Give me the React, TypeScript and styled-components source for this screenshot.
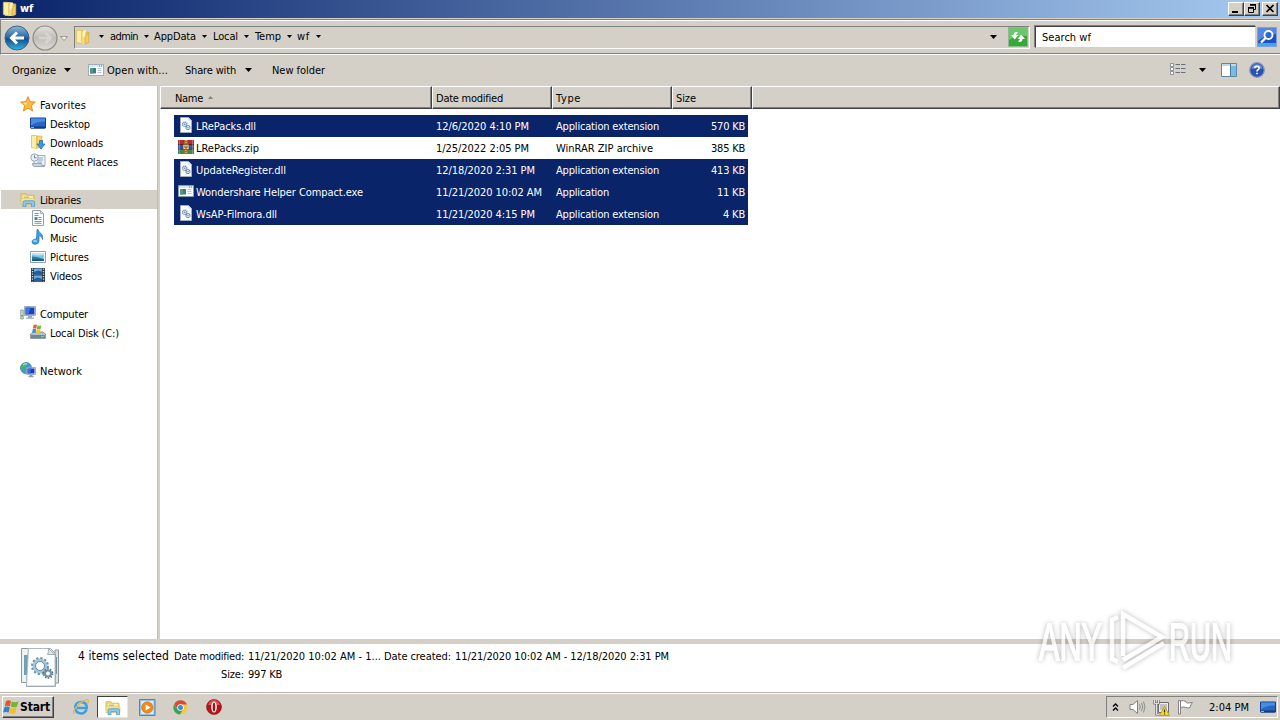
import { useLayoutEffect, useRef, useState, type ReactNode } from "react";
import styled, { createGlobalStyle, css } from "styled-components";

const GlobalStyle = createGlobalStyle`
  * { box-sizing: border-box; }
  body {
    margin: 0;
    overflow: hidden;
    background: #d4d0c8;
    color: #000;
    font-family: "DejaVu Sans Condensed", "DejaVu Sans", sans-serif;
    font-stretch: condensed;
    font-size: 11px;
    line-height: 14px;
  }
  svg { display: block; flex: none; }
`;

/* ---------- text ---------- */

const TextSpan = styled.span<{ $size?: number; $bold?: boolean }>`
  display: inline-block;
  flex: none;
  width: max-content;
  white-space: pre;
  font-size: ${p => p.$size ?? 11}px;
  font-weight: ${p => (p.$bold ? 700 : 400)};
`;

// tightens the letter spacing so a label takes the given width
function Text({ w, children, size, bold }: { w: number; children: string; size?: number; bold?: boolean }) {
  const ref = useRef<HTMLSpanElement>(null);
  const [spacing, setSpacing] = useState(0);
  useLayoutEffect(() => {
    if (ref.current) {
      setSpacing((w - ref.current.getBoundingClientRect().width) / children.length);
    }
  }, [w, children]);
  return <TextSpan ref={ref} $size={size} $bold={bold} style={{ letterSpacing: spacing }}>{children}</TextSpan>;
}

/* ---------- icons ---------- */

const FolderIcon = () => (
  <svg width="16" height="16" viewBox="0 0 16 16">
    <path d="M2 1h6l1 1.500h4.500V14L9 15H3z" fill="#e3bf4e" />
    <path d="M1.300 1.300h4.500l1 1v12.500l-5.500-1.300z" fill="#fbeeaa" stroke="#d9b64a" strokeWidth=".7" />
    <path d="M6.800 2.500h3.500V15H6.800z" fill="#f7dc7a" />
    <path d="M13.800 3v10.500L10 15V8z" fill="#f0cd62" stroke="#cfa438" strokeWidth=".6" />
    <path d="M8 1.500h3l-1 6-2 1z" fill="#fdf3c0" />
  </svg>
);

const LibraryIcon = () => (
  <svg width="16" height="16" viewBox="0 -.7 16 16">
    <path d="M1 2h5l1 1.5h7V10H1z" fill="#f3d87b" stroke="#d5ab42" strokeWidth=".7" />
    <path d="M3 4.5h10v5H3z" fill="#fdf4c4" />
    <path d="M4 5h5v1H4z" fill="#7ac17a" />
    <path d="M1 6.5h14V13H1z" fill="#f8e391" stroke="#ddb955" strokeWidth=".6" />
    <path d="M3 15V10.500q0-1.500 1.500-1.500h8.500q1.500 0 1.500 1.500V15h-3v-3H6v3z" fill="#8ac9ed" stroke="#4a93c4" strokeWidth=".7" />
  </svg>
);

const StarIcon = () => (
  <svg width="16" height="16" viewBox="0 0 16 16">
    <path d="M8 .7l2.100 4.900 5.200.5-4 3.500 1.300 5.400L8 12.200 3.400 15l1.300-5.400-4-3.500 5.200-.5z" fill="#fbb944" stroke="#e58a16" strokeWidth=".9" />
    <path d="M8 2.600L6.600 6.400l-3.700.5 3 2.300z" fill="#fde48e" />
  </svg>
);

const DesktopIcon = () => (
  <svg width="16" height="16" viewBox="0 -.5 16 16">
    <path d="M.5 2.500h15v10H.5z" fill="#2566c4" stroke="#153e8d" />
    <path d="M1 3h14v3Q6 6 1 10z" fill="#4a8ddf" />
    <path d="M1 11h14v2H1z" fill="#173a7e" />
    <path d="M1 11.500h3v1H1z" fill="#74c5d9" />
  </svg>
);

const DownloadsIcon = () => (
  <svg width="16" height="16" viewBox="0 0 16 16">
    <path d="M1.500 1.500h5v13l-5-1z" fill="#fbeeaa" stroke="#d9b64a" strokeWidth=".7" />
    <path d="M7 2h5v12H7z" fill="#f5d976" stroke="#d3ac40" strokeWidth=".6" />
    <path d="M9.500 6.500h3V10H15l-4 5-4-5h2.500z" fill="#3c9be0" stroke="#1a64ad" strokeWidth=".7" />
  </svg>
);

const RecentIcon = () => (
  <svg width="16" height="16" viewBox="0 0 16 16">
    <path d="M5 2.500h10v10H4V6z" fill="#eef4f8" stroke="#8c9aa6" strokeWidth=".8" />
    <path d="M2.500 10.500h9q0 3 3 3h-10q-2 0-2-3z" fill="#c8d6e0" stroke="#8796a3" strokeWidth=".8" />
    <path d="M8 5h5M8 7h5M7 9h5" stroke="#77a5c8" strokeWidth=".9" />
    <circle cx="4.500" cy="4.500" r="3.700" fill="#e9f0f5" stroke="#8d9ca9" strokeWidth=".9" />
    <path d="M4.500 2.300v2.500h2" fill="none" stroke="#4c6880" strokeWidth=".8" />
  </svg>
);

const DocumentIcon = () => (
  <svg width="16" height="16" viewBox="0 0 16 16">
    <path d="M2.500.5h8l3 3v12h-11z" fill="#fbfdff" stroke="#8795a0" strokeWidth=".9" />
    <path d="M10.500.5v3h3" fill="#d5e0e8" stroke="#8795a0" strokeWidth=".7" />
    <path d="M4.500 3.500h4M4.500 5.500h4M4.500 11.500h7M4.500 13.300h7" stroke="#5c8db3" strokeWidth=".9" />
    <path d="M4.500 7h3v3h-3z" fill="#3f87bb" />
    <path d="M8.500 7.500h3M8.500 9.500h3" stroke="#5c8db3" strokeWidth=".9" />
  </svg>
);

const MusicIcon = () => (
  <svg width="16" height="16" viewBox="0 0 16 16">
    <path d="M8 .5q.5 2.500 3 4 2.500 2 1.500 6Q12 7 9 6.500V12q0 3-3.500 3.300Q2 15.300 2 13q0-3 4.500-3L7 .5z" fill="#3f9fe0" stroke="#2375b9" strokeWidth=".7" />
    <ellipse cx="5" cy="12" rx="2" ry="1.100" fill="#9bd5f6" />
  </svg>
);

const PictureIcon = () => (
  <svg width="16" height="16" viewBox="0 -1 16 16">
    <path d="M.5 2.500h15v11H.5z" fill="#fff" stroke="#7c98ab" strokeWidth=".9" />
    <path d="M2 4h12v8H2z" fill="#7cc4ec" />
    <path d="M2 7.500q6 0 12 2.500v2H2z" fill="#2c7f93" />
    <path d="M2 10.500q6-1 12 .5v1H2z" fill="#1d539a" />
    <path d="M2 4h12v2Q8 7 2 5.500z" fill="#bfe4f7" />
  </svg>
);

const VideoIcon = () => (
  <svg width="16" height="16" viewBox="0 0 16 16">
    <path d="M1 1h14v14H1z" fill="#283946" />
    <path d="M4 1.500h8v6H4zM4 8.500h8v6H4z" fill="#69aee0" />
    <path d="M4 5q5-3 8 0v2.500H4zM4 12q4-3 8 0v2.500H4z" fill="#295d99" />
    <path d="M2.500 1.500v13M13.500 1.500v13" stroke="#d8e1e7" strokeWidth="1.300" strokeDasharray="1.300 1.200" />
  </svg>
);

const ComputerIcon = () => (
  <svg width="16" height="16" viewBox="0 0 16 16">
    <path d="M.7 5h2.600v9H.7z" fill="#cbd8c6" stroke="#7d8e80" strokeWidth=".7" />
    <path d="M1 10h2v1.500H1z" fill="#4fc342" />
    <path d="M4.500 1.500h11v9h-11z" fill="#dfe5ee" stroke="#8a98ac" strokeWidth=".8" />
    <path d="M5.500 2.500h9v7h-9z" fill="#1c3ec0" />
    <path d="M5.500 2.500h5l-2 7h-3z" fill="#3a76e0" />
    <path d="M8 11h4v1.500h2v1.300H6v-1.300h2z" fill="#9ba9bd" />
  </svg>
);

const DiskIcon = () => (
  <svg width="16" height="16" viewBox="0 0 16 16">
    <path d="M2 9l2-1h9l2.500 2v4.500H.5V10z" fill="#b7c4cb" stroke="#6d7f8a" strokeWidth=".7" />
    <path d="M1 11h14v3H1z" fill="#6c8a95" />
    <path d="M11 12h3v1h-3z" fill="#7de05e" />
    <path d="M3.500 1q2-1 3.500 0L6.300 4.800q-2-1-3.500 0z" fill="#e8632c" />
    <path d="M7.500 1.300q2 1 3.800 0l-.7 3.800q-2 1-3.800 0z" fill="#77b83a" />
    <path d="M2.700 5.300q2-1 3.500 0L5.500 9q-2-1-3.500 0z" fill="#3b8fd6" />
    <path d="M6.700 5.600q2 1 3.800 0l-.7 3.800q-2 1-3.800 0z" fill="#f6c22f" />
  </svg>
);

const NetworkIcon = () => (
  <svg width="16" height="16" viewBox="0 0 16 16">
    <circle cx="6" cy="6" r="5.500" fill="#3e9bd2" stroke="#2a74a8" strokeWidth=".7" />
    <path d="M2 3q3-3 5-2L6 4l-3 3-2 0zM4 8l3 1-1 2.300z" fill="#53b35d" />
    <path d="M3 3q2-2 4-1" stroke="#c7ecf4" fill="none" />
    <path d="M6.500 5.500h9v7h-9z" fill="#dfe5ee" stroke="#8391ac" strokeWidth=".7" />
    <path d="M7.500 6.500h7v5h-7z" fill="#1b3cc1" />
    <path d="M7.500 6.500h4l-1.500 5H7.500z" fill="#3470da" />
    <path d="M9.500 13h3v1h1v1.200H8.500V14h1z" fill="#8b99b5" />
  </svg>
);

const DllIcon = () => (
  <svg width="16" height="16" viewBox="0 0 16 16">
    <path d="M2.500.5h8l3 3v12h-11z" fill="#f9fcff" stroke="#aab5c3" strokeWidth=".8" />
    <path d="M10.500.5v3h3z" fill="#cfd9e3" />
    <circle cx="6.700" cy="7.300" r="2.200" fill="#dbe8f2" stroke="#5f84a5" strokeWidth="1.100" strokeDasharray="1.100 .5" />
    <circle cx="10" cy="10.500" r="2" fill="#dbe8f2" stroke="#4c7196" strokeWidth="1.100" strokeDasharray="1.100 .5" />
    <circle cx="6.700" cy="7.300" r=".7" fill="#5f84a5" />
    <circle cx="10" cy="10.500" r=".6" fill="#4c7196" />
  </svg>
);

const ExeIcon = () => (
  <svg width="16" height="16" viewBox="0 0 16 16">
    <path d="M.5 2.500h15v11H.5z" fill="#fff" stroke="#8aa0b0" strokeWidth=".8" />
    <path d="M1 3h14v2H1z" fill="#dce8f0" />
    <path d="M11 4h1M13 4h1" stroke="#5a6f80" />
    <path d="M2 6h6v5.500H2z" fill="#3b7b8c" />
    <path d="M2 6h3v5.500H2z" fill="#52997a" />
    <path d="M9.500 6.500h4M9.500 8.500h4M9.500 10.500h4" stroke="#a5b8c6" strokeWidth=".8" />
  </svg>
);

const RarIcon = () => (
  <svg width="16" height="16" viewBox="0 0 16 16">
    <path d="M0 1h16v5H0z" fill="#b52a33" />
    <path d="M0 6h16v4.500H0z" fill="#3652b4" />
    <path d="M0 10.500h16V15H0z" fill="#3d8a43" />
    <path d="M0 5.500h16M0 10.200h16" stroke="#33202c" strokeWidth=".8" />
    <path d="M1.500 1v14M14.500 1v14" stroke="#e6b3a7" strokeWidth=".7" opacity=".6" />
    <path d="M6 1h4v14H6z" fill="#a5692f" />
    <path d="M5 5.500h6v5H5z" fill="#f2dba0" stroke="#6e4219" strokeWidth=".7" />
    <path d="M7 6.500v2.500h2V6.500" fill="none" stroke="#6b5132" />
    <path d="M8 1v4M8 11v4" stroke="#f0c46b" strokeWidth="1.200" strokeDasharray="1 1" />
  </svg>
);

const BackIcon = () => (
  <svg width="26" height="26" viewBox="0 0 26 26">
    <defs>
      <linearGradient id="back" x1="0" y1="0" x2="0" y2="1">
        <stop offset="0" stopColor="#8fb9d8" />
        <stop offset=".45" stopColor="#2b6ba8" />
        <stop offset=".55" stopColor="#11518f" />
        <stop offset="1" stopColor="#35b3e6" />
      </linearGradient>
    </defs>
    <circle cx="13" cy="13" r="12" fill="url(#back)" stroke="#3f6180" />
    <path d="M20 13H8M13 7.500L7.500 13l5.500 5.500" fill="none" stroke="#fff" strokeWidth="3" />
  </svg>
);

const ForwardIcon = () => (
  <svg width="26" height="26" viewBox="0 0 26 26">
    <defs>
      <linearGradient id="fwd" x1="0" y1="0" x2="0" y2="1">
        <stop offset="0" stopColor="#e4e2de" />
        <stop offset=".5" stopColor="#bfbcb7" />
        <stop offset="1" stopColor="#dedbd5" />
      </linearGradient>
    </defs>
    <circle cx="13" cy="13" r="12" fill="url(#fwd)" stroke="#8c8b89" strokeWidth="1.200" />
    <path d="M7 13h11M13.500 8l5 5-5 5" fill="none" stroke="#d7d4cf" strokeWidth="2.500" />
  </svg>
);

const RefreshIcon = () => (
  <svg width="20" height="20" viewBox="0 0 20 20">
    <path d="M.5.5h19v19H.5z" fill="#35a83a" stroke="#8fb98e" />
    <path d="M1 1h18v8Q8 8 1 13z" fill="#6cc66c" />
    <path d="M9 5Q5.500 5 5.500 8H3l3.800 4.500L10.500 8H8q0-1.500 2-2z" fill="#fff" />
    <path d="M11 15q3.500 0 3.500-3H17l-3.800-4.500L9.500 12H12q0 1.500-2 2z" fill="#fff" />
  </svg>
);

const SearchIcon = () => (
  <svg width="20" height="20" viewBox="0 0 20 20">
    <path d="M.5.5h19v19H.5z" fill="#1c50c5" stroke="#7da1dd" />
    <path d="M1 1h18v6Q8 8 1 14z" fill="#5586e4" />
    <path d="M1 16h18v3H1z" fill="#3fa7ee" />
    <circle cx="11.500" cy="8" r="4" fill="#2f66d2" stroke="#fff" strokeWidth="1.800" />
    <path d="M8.500 11L4 15.500" stroke="#fff" strokeWidth="2.400" />
  </svg>
);

const ViewIcon = () => (
  <svg width="16" height="14" viewBox="0 0 16 14">
    {[1.5, 5.5, 9.5].map(y => (
      <g key={y}>
        <path d={`M.5 ${y - 1}h3v3h-3z`} fill="#fff" stroke="#777f87" strokeWidth=".8" />
        <path d={`M5.500 ${y}h4.500M11 ${y}h4.500`} stroke="#66707c" />
      </g>
    ))}
  </svg>
);

const PaneIcon = () => (
  <svg width="16" height="14" viewBox="0 0 16 14">
    <path d="M.5.5h15v13H.5z" fill="#fff" stroke="#5d87a6" />
    <path d="M1 1h14v2H1z" fill="#c7d9e5" />
    <path d="M10 3h5v10h-5z" fill="#76bedf" />
    <path d="M9.500 1v12" stroke="#477da2" />
  </svg>
);

const HelpIcon = () => (
  <svg width="16" height="16" viewBox="0 0 16 16">
    <circle cx="8" cy="8" r="7.300" fill="#2751b5" stroke="#8999b8" strokeWidth="1.300" />
    <path d="M2.500 7Q3 2.500 8 2.300 13 2.500 13.500 7 8 5 2.500 7z" fill="#6a93dc" />
    <path d="M5.800 6.200q0-2 2.200-2t2.200 1.800q0 1-1.200 1.700-1 .6-1 1.700M8 10.800v1.500" fill="none" stroke="#fff" strokeWidth="1.600" />
  </svg>
);

const GearStackIcon = () => (
  <svg width="40" height="43" viewBox="0 -1 40 43">
    <path d="M1.500 2.500h28v34h-28z" fill="#edf2f4" stroke="#8b989f" />
    <path d="M4 9h4v20H4z" fill="#71a1b1" />
    <path d="M35 4h3.500v33H35z" fill="#d9e1e5" stroke="#8b989f" />
    <path d="M36 11v17" stroke="#4d7d90" strokeWidth="1.500" />
    <path d="M6.500 38l2-35.500h22l5 5V40.500h-29z" fill="#fff" stroke="#a0a9ae" />
    <path d="M8.500 2.500h20l6.500 6v31.500H6.500z" fill="#fcfdfd" stroke="#a8b1b6" strokeWidth=".8" />
    <path d="M28.500 2.500q0 5-1 6h7.500z" fill="#dfe5e8" stroke="#939da3" strokeWidth=".8" />
    <circle cx="20" cy="20" r="6" fill="none" stroke="#a3c6db" strokeWidth="3" />
    <circle cx="20" cy="20" r="8" fill="none" stroke="#6e91a8" strokeWidth="2" strokeDasharray="2.200 2" />
    <circle cx="20" cy="20" r="4.500" fill="#fff" stroke="#5e88a4" />
    <circle cx="28" cy="27.500" r="3" fill="#fff" stroke="#7193a8" strokeWidth="2" />
    <circle cx="28" cy="27.500" r="4.600" fill="none" stroke="#536f80" strokeWidth="1.500" strokeDasharray="1.500 1.400" />
  </svg>
);

const WindowsIcon = () => (
  <svg width="16" height="16" viewBox="0 0 16 16">
    <path d="M3 2Q5.500.5 8 2L7 7.300Q4.500 6 1.800 7.300z" fill="#e4572e" />
    <path d="M8.800 2.400Q11.500 3.800 15.500 2.500l-1.500 5.300Q11 9 7.800 7.600z" fill="#72b53e" />
    <path d="M1.500 8.200Q4.500 7 6.800 8.200L5.700 13.500Q3 12.300 0 13.500z" fill="#3780d1" />
    <path d="M7.600 8.500q3 1.500 6 .2L12.400 14.100q-3 1.300-5.900-.2z" fill="#f5bd2b" />
  </svg>
);

const IeIcon = () => (
  <svg width="18" height="18" viewBox="0 0 18 18">
    <path d="M14.500 11.500Q13 15.500 9 15.500 3.300 15 3.300 9.500 3.500 4 9.300 4q5.500.3 5.500 6H5" fill="none" stroke="#3d9fe0" strokeWidth="2.500" />
    <path d="M5.500 7Q7 4.300 10 4.400" fill="none" stroke="#a7def8" strokeWidth="1.200" />
    <path d="M2 16q-2-3 4-8.500Q12 1 15.700 1.700q1.500.8-.2 3.800" fill="none" stroke="#e3b844" strokeWidth="1.300" />
  </svg>
);

const PlayerIcon = () => (
  <svg width="17" height="17" viewBox="0 0 17 17">
    <path d="M.5.500h15.500v16H.5z" fill="#8ec2ea" stroke="#4b87bb" />
    <path d="M2 2h12.500v13H2z" fill="#d9edf8" />
    <circle cx="8.300" cy="8.500" r="5.700" fill="#f08a1d" stroke="#c96c10" strokeWidth=".6" />
    <path d="M6.600 5.500l5 3-5 3z" fill="#fff" />
  </svg>
);

const ChromeIcon = () => (
  <svg width="15" height="15" viewBox="0 0 15 15">
    <circle cx="7.500" cy="7.500" r="7" fill="#f2ca3b" />
    <path d="M1.200 4.200A7 7 0 0 1 14 4.500H7.500L4.800 9z" fill="#dc4738" />
    <path d="M1.200 4.200A7 7 0 0 0 7 14.500L10.500 8.500l-6 .5z" fill="#3da457" />
    <circle cx="7.500" cy="7.500" r="3.300" fill="#fff" />
    <circle cx="7.500" cy="7.500" r="2.500" fill="#4384e8" />
  </svg>
);

const OperaIcon = () => (
  <svg width="16" height="16" viewBox="0 0 16 16">
    <circle cx="8" cy="8" r="7.500" fill="#b5161c" stroke="#8d0f13" strokeWidth=".6" />
    <path d="M2 6q2-5 6-5t6 5z" fill="#d9504f" />
    <ellipse cx="8" cy="8" rx="2.800" ry="5.500" fill="#fff" />
    <ellipse cx="8" cy="8" rx="1.300" ry="4.500" fill="#a01016" />
  </svg>
);

const ChevronsIcon = () => (
  <svg width="7" height="8" viewBox="0 0 7 8">
    <path d="M1 3.500L3.500 1 6 3.500M1 7.500L3.500 5 6 7.500" fill="none" stroke="#000" strokeWidth="1.300" />
  </svg>
);

const SpeakerIcon = () => (
  <svg width="17" height="16" viewBox="0 0 17 16">
    <path d="M1 5.500h3L8.500 1.500v13L4 10.500H1z" fill="#fff" stroke="#777" strokeWidth=".9" />
    <path d="M10.500 5.500q1.500 2.500 0 5M12.500 3.800q2.500 4.200 0 8.400M14.500 2.500q3 5.500 0 11" fill="none" stroke="#858585" strokeWidth=".9" />
  </svg>
);

const NetTrayIcon = () => (
  <svg width="17" height="17" viewBox="0 0 17 17">
    <path d="M5.500 3.500h10v10h-10z" fill="#eee" stroke="#6c6c6c" />
    <path d="M7 5h7v6H7z" fill="#bfc3c6" />
    <path d="M1.500 1v3.500h4V1M3.500 5v10.500h3" fill="none" stroke="#666" strokeWidth="2.200" />
    <path d="M1.500 1v3.500h4V1M3.500 5v10.500h3" fill="none" stroke="#fff" strokeWidth=".8" />
    <path d="M11.500 7.500l5 9h-10z" fill="#f7d92e" stroke="#b98c12" strokeWidth=".8" />
    <path d="M11.500 10.500v3M11.500 14.500v1" stroke="#332" strokeWidth="1.200" />
  </svg>
);

const FlagIcon = () => (
  <svg width="17" height="16" viewBox="0 0 17 16">
    <path d="M1.500 1.500h2V15h-2z" fill="#fff" stroke="#777" strokeWidth=".9" />
    <path d="M3.500 2q3-1 5.500.5 0 1.500 1.500 1.500t5-.5q-2 2-2.500 5-2 1-4 0Q6.500 7.300 3.500 8.500z" fill="#fff" stroke="#777" strokeWidth=".9" />
  </svg>
);

const Arrow = () => (
  <svg width="7" height="4" viewBox="0 0 7 4"><path d="M0 0h7L3.500 4z" /></svg>
);

const SmallArrow = () => (
  <svg width="5" height="3" viewBox="0 0 5 3"><path d="M0 0h5L2.500 3z" /></svg>
);

/* ---------- window frame ---------- */

const Desktop = styled.div`
  position: relative;
  display: flex;
  flex-direction: column;
  width: 1280px;
  height: 720px;
  overflow: hidden;
`;

const TitleBar = styled.header`
  display: flex;
  align-items: center;
  flex: none;
  height: 18px;
  padding: 0 2px;
  gap: 2px;
  color: #fff;
  background: linear-gradient(90deg, #0a246a, #a6caf0);
`;

const Spacer = styled.div`
  flex: 1;
`;

const CaptionButton = styled.button<{ $gap?: boolean }>`
  width: 16px;
  height: 14px;
  margin: 0 0 0 ${p => (p.$gap ? 2 : 0)}px;
  padding: 0;
  background: #d4d0c8;
  border: 1px solid;
  border-color: #fff #404040 #404040 #fff;
  box-shadow: inset -1px -1px #808080;
`;

const CaptionGroup = styled.div`
  display: flex;
`;

const NavBar = styled.div`
  display: flex;
  flex: none;
  height: 36px;
  padding: 5px 2px 0 3px;
  border-top: 1px solid #808080;
  border-bottom: 1px solid #fff;
  border-left: 1px solid #808080;
  box-shadow: inset 0 1px #fff, inset 0 -1px #808080;
  margin-top: 1px;
`;

const TravelButtons = styled.div`
  display: flex;
  gap: 2px;
  width: 70px;
  height: 26px;
  svg:last-child { margin: 11px 0 0 0; }
`;

const sunken = css`
  border: 1px solid;
  border-color: #808080 #fff #fff #808080;
`;

const AddressBar = styled.div`
  display: flex;
  align-items: center;
  width: 956px;
  height: 23px;
  margin-top: 1px;
  padding: 0 1px 2px 0;
  ${sunken}
`;

const Crumbs = styled.div`
  display: flex;
  align-items: center;
  margin-left: 8px;
`;

const Crumb = styled.div<{ $lead: number }>`
  display: flex;
  align-items: center;
  padding-left: ${p => p.$lead}px;
`;

const CrumbText = styled.div<{ $w: number }>`
  width: ${p => p.$w}px;
  margin-right: 6px;
`;

const RefreshBox = styled.div`
  margin-left: 11px;
`;

const SearchBox = styled.div`
  display: flex;
  align-items: center;
  width: 221px;
  height: 22px;
  margin: 1px 1px 0 5px;
  padding: 2px 0 0 6px;
  background: #fff;
  border: 1px solid;
  border-color: #404040 #d4d0c8 #d4d0c8 #404040;
  box-shadow: -1px -1px #808080;
`;

const SearchButton = styled.div`
  margin-top: 2px;
`;

const ToolBar = styled.div`
  display: flex;
  align-items: center;
  flex: none;
  height: 31px;
  padding: 0 15px 0 12px;
  svg { margin-bottom: 1px; }
`;

const Tool = styled.div<{ $after: number; $gap?: number }>`
  display: flex;
  align-items: center;
  gap: ${p => p.$gap ?? 0}px;
  margin-right: ${p => p.$after}px;
`;

/* ---------- body ---------- */

const Body = styled.div`
  display: flex;
  flex: none;
  height: 553px;
`;

const Tree = styled.nav`
  width: 157px;
  padding-top: 9px;
  background: #fff;
`;

const Splitter = styled.div`
  width: 3px;
  background: #d4d0c8;
  border-left: 1px solid #c0bcb4;
`;

const TreeGroup = styled.div`
  padding-bottom: 19px;
`;

const TreeRow = styled.div<{ $child?: boolean; $active?: boolean }>`
  display: flex;
  align-items: center;
  gap: 4px;
  height: 19px;
  margin-left: 1px;
  padding: 0 0 0 ${p => (p.$child ? 29 : 19)}px;
  background: ${p => (p.$active ? "#d4d0c8" : "transparent")};
  span { padding-top: 2px; }
  svg { margin-top: -1px; }
`;

const FilePane = styled.main`
  flex: 1;
  background: #fff;
`;

const HeaderRow = styled.div`
  display: flex;
  height: 23px;
  background: #d4d0c8;
`;

const HeaderCell = styled.div<{ $w?: number; $pad: number }>`
  display: flex;
  align-items: center;
  gap: 5px;
  width: ${p => (p.$w ? `${p.$w}px` : "auto")};
  flex: ${p => (p.$w ? "none" : 1)};
  padding: 2px 0 0 ${p => p.$pad}px;
  border: 1px solid;
  border-color: #fff #404040 #404040 #fff;
  box-shadow: inset -1px -1px #808080;
  svg { margin-top: -3px; }
`;

const FileRows = styled.div`
  width: 574px;
  margin: 6px 0 0 14px;
`;

const FileRow = styled.div<{ $selected: boolean }>`
  display: grid;
  grid-template-columns: 22px 240px 120px 116px 73px;
  align-items: center;
  height: 22px;
  color: ${p => (p.$selected ? "#fff" : "#000")};
  background: ${p => (p.$selected ? "#0a246a" : "#fff")};
  span { padding-top: 2px; }
`;

const FileIcon = styled.div`
  padding: 0 0 2px 4px;
`;

const SizeCell = styled.div`
  display: flex;
  justify-content: flex-end;
`;

/* ---------- details and taskbar ---------- */

const Details = styled.section`
  display: flex;
  flex: none;
  height: 54px;
  padding: 1px 0 0 20px;
  background: #fff;
  border-top: 5px solid #d4d0c8;
  border-bottom: 1px solid #b8b5ae;
`;

const DetailsTitle = styled.div`
  flex: none;
  width: 114px;
  padding: 4px 0 0 18px;
`;

const DetailsGrid = styled.dl`
  display: grid;
  grid-template-columns: 70px 132px 67px 220px;
  grid-auto-rows: 18px;
  column-gap: 4px;
  margin: 5px 0 0;
  dt, dd { margin: 0; }
  dt { display: flex; justify-content: flex-end; }
`;

const TaskBar = styled.footer`
  display: flex;
  align-items: center;
  flex: 1;
  padding: 0 2px;
  border-top: 1px solid #fff;
`;

const StartButton = styled.button`
  display: flex;
  align-items: center;
  gap: 1px;
  width: 52px;
  height: 22px;
  padding: 0;
  color: #000;
  font: inherit;
  line-height: 14px;
  background: #d4d0c8;
  border: 1px solid;
  border-color: #fff #404040 #404040 #fff;
  box-shadow: inset -1px -1px #808080;
`;

const QuickLaunch = styled.div`
  display: flex;
  margin-left: 10px;
`;

const TaskItem = styled.div<{ $w: number; $active?: boolean }>`
  display: flex;
  align-items: center;
  justify-content: center;
  width: ${p => p.$w}px;
  height: 22px;
  ${p => p.$active && css`
    background: #fff;
    border: 1px solid;
    border-color: #404040 #e8e6e2 #e8e6e2 #404040;
  `}
`;

const Tray = styled.div`
  display: flex;
  align-items: center;
  width: 172px;
  height: 22px;
  padding-left: 5px;
  ${sunken}
  span { padding-top: 2px; }
`;

const TrayItem = styled.div<{ $w: number }>`
  width: ${p => p.$w}px;
`;

const Watermark = styled.svg`
  position: absolute;
  left: 1030px;
  top: 600px;
  opacity: .7;
  filter: drop-shadow(0 0 2.5px rgba(0, 0, 0, .4));
`;

/* ---------- data ---------- */

type Node = { label: string; w: number; icon: ReactNode; active?: boolean };

const tree: Node[][] = [
  [
    { label: "Favorites", w: 46, icon: <StarIcon /> },
    { label: "Desktop", w: 40, icon: <DesktopIcon /> },
    { label: "Downloads", w: 53, icon: <DownloadsIcon /> },
    { label: "Recent Places", w: 68, icon: <RecentIcon /> },
  ],
  [
    { label: "Libraries", w: 41, icon: <LibraryIcon />, active: true },
    { label: "Documents", w: 54, icon: <DocumentIcon /> },
    { label: "Music", w: 27, icon: <MusicIcon /> },
    { label: "Pictures", w: 39, icon: <PictureIcon /> },
    { label: "Videos", w: 32, icon: <VideoIcon /> },
  ],
  [
    { label: "Computer", w: 48, icon: <ComputerIcon /> },
    { label: "Local Disk (C:)", w: 69, icon: <DiskIcon /> },
  ],
  [{ label: "Network", w: 42, icon: <NetworkIcon /> }],
];

type Cell = [string, number];
type FileEntry = { icon: ReactNode; name: Cell; date: Cell; type: Cell; size: Cell; selected: boolean };

const files: FileEntry[] = [
  { icon: <DllIcon />, name: ["LRePacks.dll", 60], date: ["12/6/2020 4:10 PM", 93], type: ["Application extension", 103], size: ["570 KB", 34], selected: true },
  { icon: <RarIcon />, name: ["LRePacks.zip", 63], date: ["1/25/2022 2:05 PM", 93], type: ["WinRAR ZIP archive", 97], size: ["385 KB", 34], selected: false },
  { icon: <DllIcon />, name: ["UpdateRegister.dll", 90], date: ["12/18/2020 2:31 PM", 99], type: ["Application extension", 103], size: ["413 KB", 34], selected: true },
  { icon: <ExeIcon />, name: ["Wondershare Helper Compact.exe", 167], date: ["11/21/2020 10:02 AM", 106], type: ["Application", 53], size: ["11 KB", 28], selected: true },
  { icon: <DllIcon />, name: ["WsAP-Filmora.dll", 81], date: ["11/21/2020 4:15 PM", 99], type: ["Application extension", 103], size: ["4 KB", 22], selected: true },
];

const crumbs = [
  { label: "admin", w: 28, lead: 6 },
  { label: "AppData", w: 42, lead: 5 },
  { label: "Local", w: 25, lead: 6 },
  { label: "Temp", w: 26, lead: 6 },
  { label: "wf", w: 13, lead: 5 },
];

export default function App() {
  return (
    <Desktop>
      <GlobalStyle />
      <TitleBar>
        <FolderIcon />
        <Text w={13} bold>wf</Text>
        <Spacer />
        <CaptionGroup>
          <CaptionButton>
            <svg width="14" height="12"><path d="M3 8h6v2H3z" /></svg>
          </CaptionButton>
          <CaptionButton>
            <svg width="14" height="12">
              <path d="M5.500 2v-.5h5v5H9M5 2h6M3.500 5v4.500h5V5M3 5h6" fill="none" stroke="#000" />
              <path d="M5 1h6v1.500H5zM3 4h6v1.500H3z" />
            </svg>
          </CaptionButton>
          <CaptionButton $gap>
            <svg width="14" height="12"><path d="M3.500 2l7 7M10.500 2l-7 7" stroke="#000" strokeWidth="1.700" /></svg>
          </CaptionButton>
        </CaptionGroup>
      </TitleBar>

      <NavBar>
        <TravelButtons>
          <BackIcon />
          <ForwardIcon />
          <svg width="8" height="5" viewBox="0 0 8 5"><path d="M.5.5h7L4 4.500z" fill="#f4f3f0" stroke="#888" strokeWidth=".8" /></svg>
        </TravelButtons>
        <AddressBar>
          <FolderIcon />
          <Crumbs>
            <SmallArrow />
            {crumbs.map(c => (
              <Crumb key={c.label} $lead={c.lead}>
                <CrumbText $w={c.w}><Text w={c.w}>{c.label}</Text></CrumbText>
                <SmallArrow />
              </Crumb>
            ))}
          </Crumbs>
          <Spacer />
          <Arrow />
          <RefreshBox><RefreshIcon /></RefreshBox>
        </AddressBar>
        <SearchBox><Text w={49}>Search wf</Text></SearchBox>
        <SearchButton><SearchIcon /></SearchButton>
      </NavBar>

      <ToolBar>
        <Tool $after={17} $gap={8}><Text w={44}>Organize</Text><Arrow /></Tool>
        <Tool $after={17} $gap={3}><ExeIcon /><Text w={61}>Open with...</Text></Tool>
        <Tool $after={20} $gap={9}><Text w={51}>Share with</Text><Arrow /></Tool>
        <Tool $after={0}><Text w={53}>New folder</Text></Tool>
        <Spacer />
        <Tool $after={15} $gap={13}><ViewIcon /><Arrow /></Tool>
        <Tool $after={12}><PaneIcon /></Tool>
        <HelpIcon />
      </ToolBar>

      <Body>
        <Tree>
          {tree.map(group => (
            <TreeGroup key={group[0].label}>
              {group.map((node, i) => (
                <TreeRow key={node.label} $child={i > 0} $active={node.active}>
                  {node.icon}
                  <Text w={node.w}>{node.label}</Text>
                </TreeRow>
              ))}
            </TreeGroup>
          ))}
        </Tree>
        <Splitter />
        <FilePane>
          <HeaderRow>
            <HeaderCell $w={272} $pad={14}>
              <Text w={28}>Name</Text>
              <svg width="5" height="3" viewBox="0 0 5 3"><path d="M0 3h5L2.500 0z" fill="#808080" /></svg>
            </HeaderCell>
            <HeaderCell $w={120} $pad={3}><Text w={67}>Date modified</Text></HeaderCell>
            <HeaderCell $w={120} $pad={3}><Text w={25}>Type</Text></HeaderCell>
            <HeaderCell $w={80} $pad={3}><Text w={20}>Size</Text></HeaderCell>
            <HeaderCell $pad={0} />
          </HeaderRow>
          <FileRows>
            {files.map(f => (
              <FileRow key={f.name[0]} $selected={f.selected}>
                <FileIcon>{f.icon}</FileIcon>
                <Text w={f.name[1]}>{f.name[0]}</Text>
                <Text w={f.date[1]}>{f.date[0]}</Text>
                <Text w={f.type[1]}>{f.type[0]}</Text>
                <SizeCell><Text w={f.size[1]}>{f.size[0]}</Text></SizeCell>
              </FileRow>
            ))}
          </FileRows>
        </FilePane>
      </Body>

      <Details>
        <GearStackIcon />
        <DetailsTitle><Text w={91} size={12}>4 items selected</Text></DetailsTitle>
        <DetailsGrid>
          <dt><Text w={70}>Date modified:</Text></dt>
          <dd><Text w={133}>11/21/2020 10:02 AM - 1...</Text></dd>
          <dt><Text w={67}>Date created:</Text></dt>
          <dd><Text w={214}>11/21/2020 10:02 AM - 12/18/2020 2:31 PM</Text></dd>
          <dt><Text w={23}>Size:</Text></dt>
          <dd><Text w={34}>997 KB</Text></dd>
        </DetailsGrid>
      </Details>

      <TaskBar>
        <StartButton><WindowsIcon /><Text w={30} size={12} bold>Start</Text></StartButton>
        <QuickLaunch>
          <TaskItem $w={33}><IeIcon /></TaskItem>
          <TaskItem $w={31} $active><LibraryIcon /></TaskItem>
          <TaskItem $w={38}><PlayerIcon /></TaskItem>
          <TaskItem $w={29}><ChromeIcon /></TaskItem>
          <TaskItem $w={37}><OperaIcon /></TaskItem>
        </QuickLaunch>
        <Spacer />
        <Tray>
          <TrayItem $w={17}><ChevronsIcon /></TrayItem>
          <TrayItem $w={24}><SpeakerIcon /></TrayItem>
          <TrayItem $w={24}><NetTrayIcon /></TrayItem>
          <TrayItem $w={32}><FlagIcon /></TrayItem>
          <TrayItem $w={51}><Text w={40}>2:04 PM</Text></TrayItem>
          <DesktopIcon />
        </Tray>
      </TaskBar>

      <Watermark width="240" height="100" viewBox="0 0 240 100">
        <g fill="#fff" stroke="#fff" strokeWidth="1.800" fontFamily="Liberation Sans Narrow, Liberation Sans, sans-serif" fontSize="51">
          <text transform="translate(9 60) scale(.6 1)">ANY</text>
          <text transform="translate(139 60) scale(.57 1)">RUN</text>
        </g>
        <g fill="none" stroke="#fff" strokeWidth="4.500">
          <path d="M93 56V14L132 37 93 60" />
          <path d="M88 17l-6 3v39l6 3M93 68l41-25" />
        </g>
      </Watermark>
    </Desktop>
  );
}
